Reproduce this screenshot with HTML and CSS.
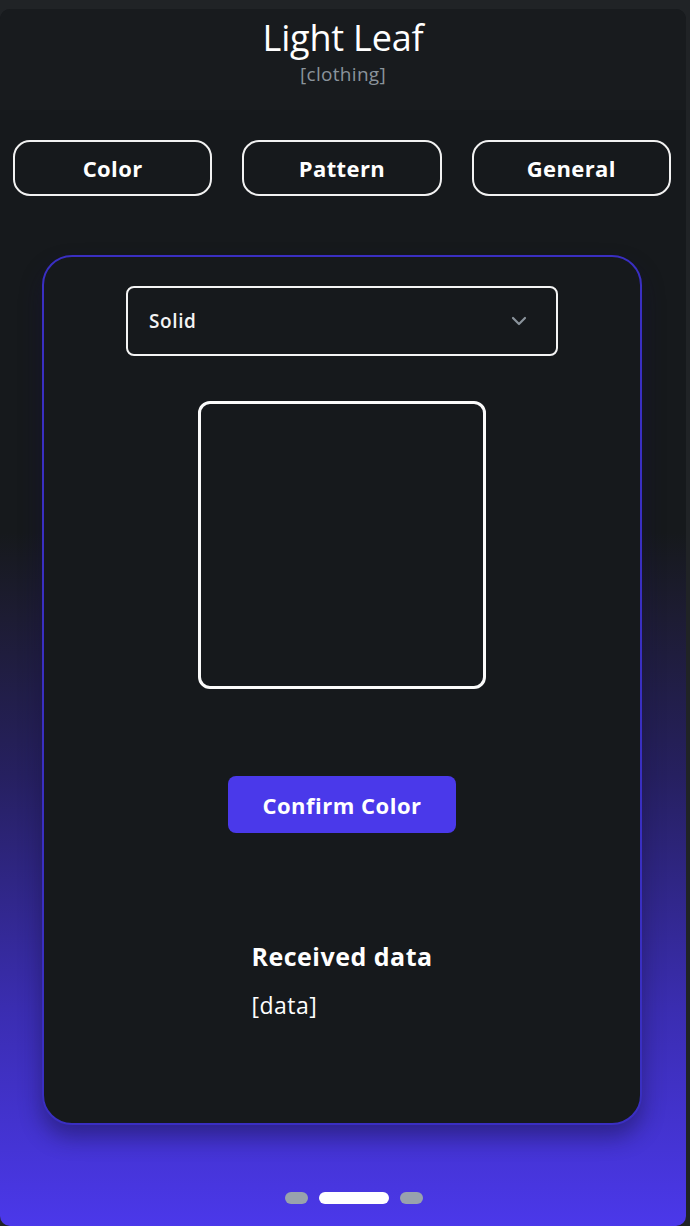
FILE: index.html
```html
<!DOCTYPE html>
<html>
<head>
<meta charset="utf-8">
<link rel="stylesheet" href="styles.css">
</head>
<body>
<div class="app">
  <header class="header">
    <h1 class="title">Light Leaf</h1>
    <div class="subtitle">[clothing]</div>
  </header>
  <nav class="tabs">
    <button class="tab">Color</button>
    <button class="tab">Pattern</button>
    <button class="tab">General</button>
  </nav>
  <main class="card">
    <div class="select">
      <span class="select-text">Solid</span>
      <svg class="chev" width="16" height="10" viewBox="0 0 16 10"><path d="M2 2 L8 8 L14 2" fill="none" stroke="#8a939b" stroke-width="2.2" stroke-linecap="round" stroke-linejoin="round"/></svg>
    </div>
    <div class="swatch"></div>
    <button class="confirm">Confirm Color</button>
    <div class="received">
      <div class="received-title">Received data</div>
      <div class="received-data">[data]</div>
    </div>
  </main>
  <div class="dots">
    <span class="dot"></span>
    <span class="dot active"></span>
    <span class="dot"></span>
  </div>
</div>
</body>
</html>
```
FILE: styles.css
```css
html, body {
  margin: 0;
  padding: 0;
  background: #202326;
}
body {
  font-family: "Open Sans", sans-serif;
  color: #fff;
}
.app {
  margin: 9px 4px 0 0;
  height: 1217px;
  border-radius: 10px;
  overflow: hidden;
  background: linear-gradient(to bottom, #16191c 0%, #16191c 43%, #1d1c33 50%, #262060 63%, #3a2db0 82%, #4b38ea 100%);
  display: flex;
  flex-direction: column;
  align-items: stretch;
}
.header {
  height: 101px;
  box-sizing: border-box;
  padding-top: 9px;
  background: #181b1e;
  display: flex;
  flex-direction: column;
  align-items: center;
}
.title {
  margin: 0;
  font-family: "Open Sans", sans-serif;
  font-weight: 400;
  font-size: 36px;
  line-height: 40px;
  color: #fff;
  letter-spacing: -0.2px;
}
.subtitle {
  margin-top: 5px;
  font-family: "Open Sans", sans-serif;
  font-size: 19px;
  line-height: 22px;
  color: #8a939b;
  letter-spacing: 0.3px;
}
.tabs {
  margin-top: 30px;
  padding: 0 15px 0 13px;
  display: grid;
  grid-template-columns: 1fr 1fr 1fr;
  gap: 30px;
}
.tab {
  height: 56px;
  background: #16191c;
  border: 2px solid #f2f2f2;
  border-radius: 17px;
  color: #fff;
  font-family: "Open Sans", sans-serif;
  font-weight: 700;
  font-size: 22px;
  letter-spacing: 0.4px;
  padding: 0;
}
.card {
  margin: 59px 44px 0 42px;
  height: 870px;
  box-sizing: border-box;
  border: 2px solid #3a2fc2;
  border-radius: 30px;
  background: #16191c;
  box-shadow: 0 12px 22px rgba(20, 15, 60, 0.45);
  padding-top: 29px;
  display: flex;
  flex-direction: column;
  align-items: center;
}
.select {
  width: 432px;
  height: 70px;
  box-sizing: border-box;
  border: 2px solid #f4f4f4;
  border-radius: 8px;
  display: flex;
  align-items: center;
  justify-content: space-between;
  padding: 0 29px 0 21px;
}
.select-text {
  font-size: 19px;
  font-weight: 600;
  letter-spacing: 0.6px;
  color: #f4f4f4;
}
.chev {
  display: block;
}
.swatch {
  margin-top: 45px;
  width: 288px;
  height: 288px;
  box-sizing: border-box;
  border: 3px solid #fafafa;
  border-radius: 12px;
}
.confirm {
  margin-top: 87px;
  width: 228px;
  height: 57px;
  border: none;
  border-radius: 8px;
  background: #4a39ea;
  color: #fff;
  font-family: "Open Sans", sans-serif;
  font-weight: 700;
  font-size: 22px;
  letter-spacing: 0.5px;
  padding: 0;
}
.received {
  margin-top: 108px;
  display: flex;
  flex-direction: column;
  align-items: flex-start;
}
.received-title {
  font-size: 25px;
  font-weight: 700;
  line-height: 30px;
  letter-spacing: 0.5px;
}
.received-data {
  margin-top: 20px;
  font-size: 23px;
  line-height: 28px;
  letter-spacing: 0.5px;
}
.dots {
  margin-top: 67px;
  display: flex;
  justify-content: center;
  gap: 11px;
  padding-left: 22px;
}
.dot {
  width: 23px;
  height: 12px;
  border-radius: 6px;
  background: #98a2ad;
}
.dot.active {
  width: 70px;
  background: #fff;
}
```
